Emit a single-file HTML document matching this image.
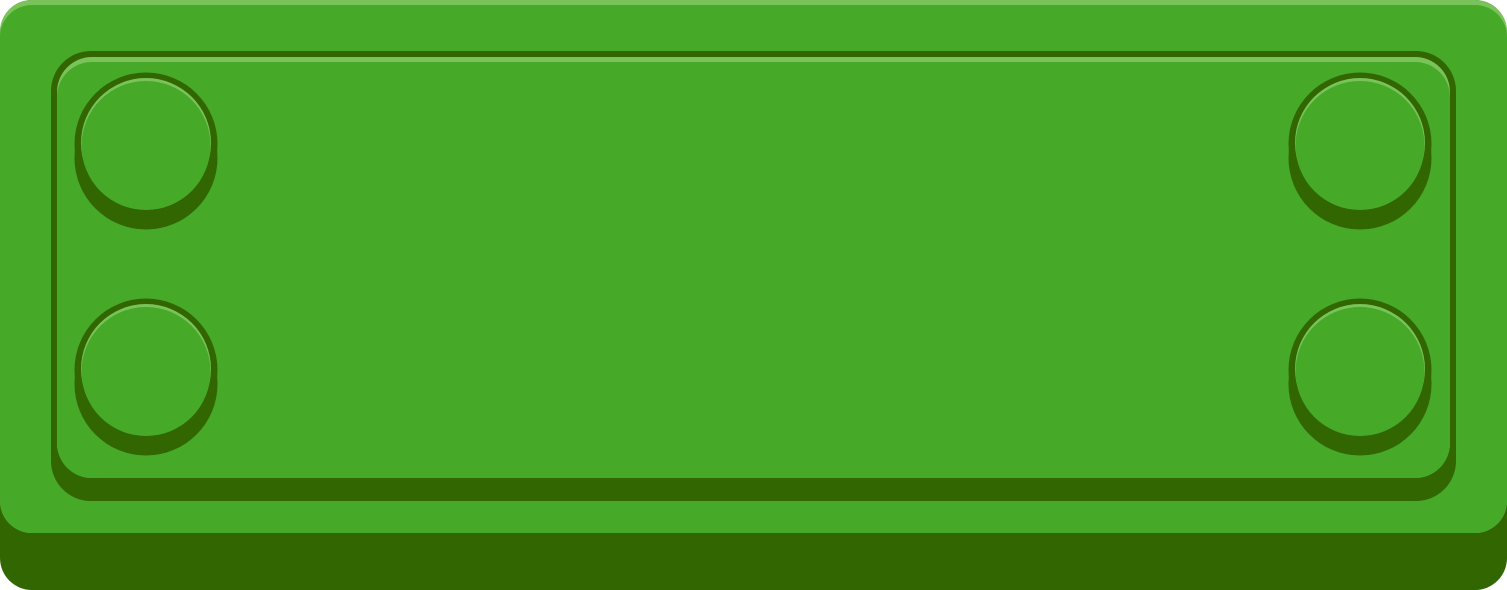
<!DOCTYPE html>
<html><head><meta charset="utf-8"><style>
html,body{margin:0;padding:0;background:#fff;width:1507px;height:590px;overflow:hidden}
svg{display:block}
</style></head><body>
<svg width="1507" height="590" viewBox="0 0 1507 590" xmlns="http://www.w3.org/2000/svg">
<defs>
<g id="stud">
<circle cx="0" cy="14" r="71.5" fill="#316600"/>
<circle cx="0" cy="0" r="71.5" fill="#316600"/>
<circle cx="0" cy="-1" r="65" fill="#79c35a"/>
<circle cx="0" cy="1.5" r="64.5" fill="#47a928"/>
</g>
</defs>
<rect x="0" y="0" width="1507" height="590" rx="32" fill="#316600"/>
<rect x="0" y="0" width="1507" height="533" rx="32" fill="#79c35a"/>
<rect x="0" y="5" width="1507" height="528" rx="32" fill="#47a928"/>
<rect x="51" y="51" width="1405" height="450" rx="40" fill="#316600"/>
<rect x="57" y="57" width="1393" height="421" rx="35" fill="#79c35a"/>
<rect x="57" y="62" width="1393" height="416" rx="35" fill="#47a928"/>
<rect x="57" y="100" width="1393" height="378" rx="35" fill="#47a928"/>
<use href="#stud" x="146" y="144"/>
<use href="#stud" x="146" y="370"/>
<use href="#stud" x="1360" y="144"/>
<use href="#stud" x="1360" y="370"/>
</svg>
</body></html>
